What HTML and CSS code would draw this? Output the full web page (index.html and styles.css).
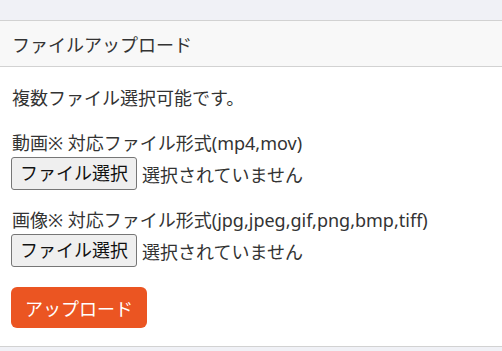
FILE: index.html
```html
<!DOCTYPE html>
<html lang="ja">

<head>
    <meta charset="UTF-8">
    <meta name="viewport" content="width=device-width, initial-scale=1.0">
    <title>ファイルアップロード</title>
    <link rel="stylesheet" href="styles.css">
</head>

<body>
    <div class="card">
        <div class="card-header">ファイルアップロード</div>
        <div class="card-body">
            <p class="note">複数ファイル選択可能です。</p>

            <div class="field">
                <label class="field-label">動画※ 対応ファイル形式(mp4,mov)</label>
                <div class="file-row">
                    <span class="file-button">ファイル選択</span>
                    <span class="file-status">選択されていません</span>
                </div>
            </div>

            <div class="field">
                <label class="field-label">画像※ 対応ファイル形式(jpg,jpeg,gif,png,bmp,tiff)</label>
                <div class="file-row">
                    <span class="file-button">ファイル選択</span>
                    <span class="file-status">選択されていません</span>
                </div>
            </div>

            <button class="upload-button">アップロード</button>
        </div>
    </div>
</body>

</html>
```

FILE: styles.css
```css
body {
    margin: 0;
    padding-top: 20px;
    background-color: #f0f1f6;
    font-family: "Noto Sans", "Noto Sans CJK JP", sans-serif;
    font-size: 18px;
    color: #333;
}

.card {
    background-color: #fff;
    border-top: 1px solid #d2d2d2;
    border-bottom: 1px solid #d2d2d2;
}

.card-header {
    height: 45px;
    display: flex;
    align-items: center;
    padding: 0 12px;
    background-color: #f8f8f8;
    border-bottom: 1px solid #d2d2d2;
}

.card-body {
    padding: 18px 11px 18px;
}

.note {
    margin: 0 0 18px 1px;
    line-height: 26px;
}

.field {
    margin-bottom: 16px;
}

.field:last-of-type {
    margin-bottom: 20px;
}

.field-label {
    display: block;
    margin-left: 1px;
    line-height: 28px;
}

.file-row {
    display: flex;
    align-items: center;
    gap: 5px;
}

.file-button {
    box-sizing: border-box;
    display: inline-block;
    height: 33px;
    line-height: 31px;
    padding: 0 8px;
    color: #111;
    background-color: #efefef;
    border: 1px solid #767676;
    border-radius: 3px;
}

.upload-button {
    display: block;
    height: 41px;
    padding: 0 14px;
    font-family: inherit;
    font-size: 18px;
    color: #fff;
    background-color: #eb5522;
    border: none;
    border-radius: 6px;
}
```
